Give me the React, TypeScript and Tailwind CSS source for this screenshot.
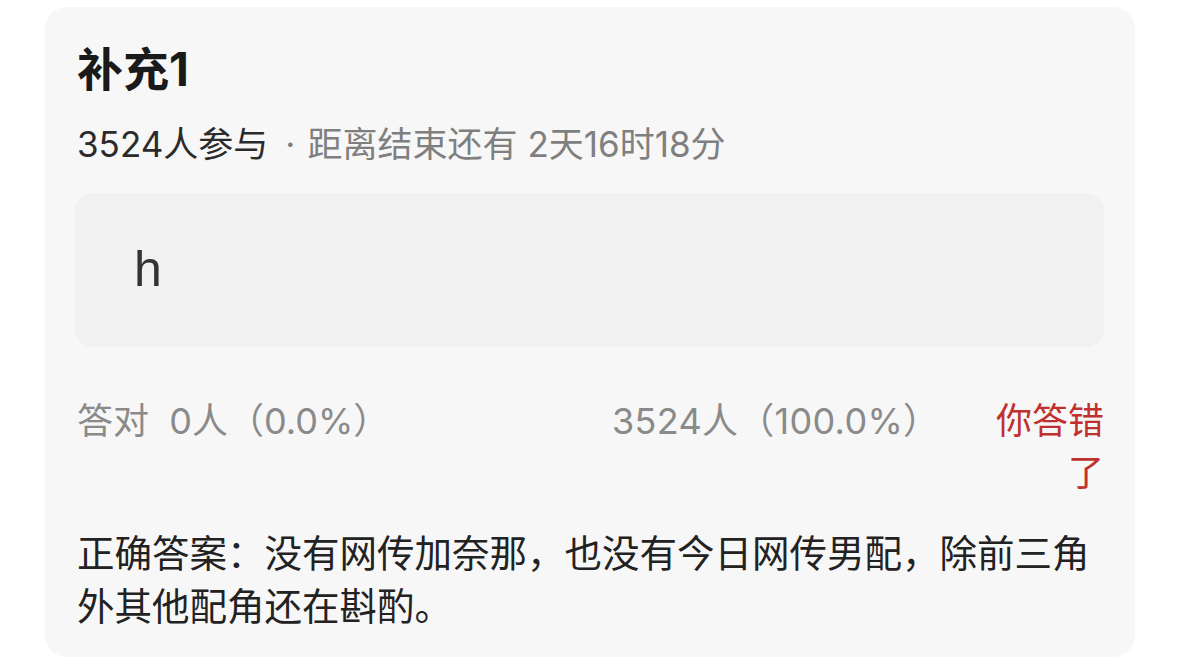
import React from "react";

const FONT = 'Inter, "Noto Sans CJK SC", "Noto Sans", sans-serif';

export default function App() {
  return (
    <div className="w-[1179px] h-[667px] bg-white overflow-hidden" style={{ fontFamily: FONT }}>
      <div className="ml-[45px] mt-[7px] w-[1090px] h-[650px] rounded-[22px] bg-[#f7f7f7] pl-[30px] pr-[31px] pt-[35px]">
        <div className="pl-[2px] text-[46px] leading-[55px] font-bold text-[#1a1a1a]">补充1</div>
        <div className="pl-[2px] mt-[23px] text-[35px] leading-[48px] whitespace-nowrap flex">
          <span className="text-[#2b2b2b]">3524人参与</span>
          <span className="text-[#7f7f7f] ml-[17px] mr-[12px]">·</span>
          <span className="text-[#7f7f7f]">距离结束还有</span>
          <span className="text-[#7f7f7f] ml-[10px]">2天16时18分</span>
        </div>
        <div className="mt-[25px] h-[154px] rounded-[18px] bg-[#f1f1f1] flex items-center pl-[59px]">
          <span className="text-[50px] leading-none text-[#333333] -mt-[2px]" style={{ fontFamily: '"Liberation Sans", sans-serif' }}>h</span>
        </div>
        <div className="mt-[48px] pl-[2px] flex text-[36px] leading-[52px]">
          <div className="w-[535px] text-[#8a8a8a] whitespace-nowrap">答对&nbsp; 0人（0.0%）</div>
          <div className="flex-1 text-[#8a8a8a] whitespace-nowrap tracking-[0.3px]">3524人（100.0%）</div>
          <div className="w-[110px] text-right text-[#c0302e]">你答错了</div>
        </div>
        <div className="mt-[28px] pl-[2px] text-[37.5px] leading-[53px] text-[#222222]">
          正确答案：没有网传加奈那，也没有今日网传男配，除前三角外其他配角还在斟酌。
        </div>
      </div>
    </div>
  );
}
